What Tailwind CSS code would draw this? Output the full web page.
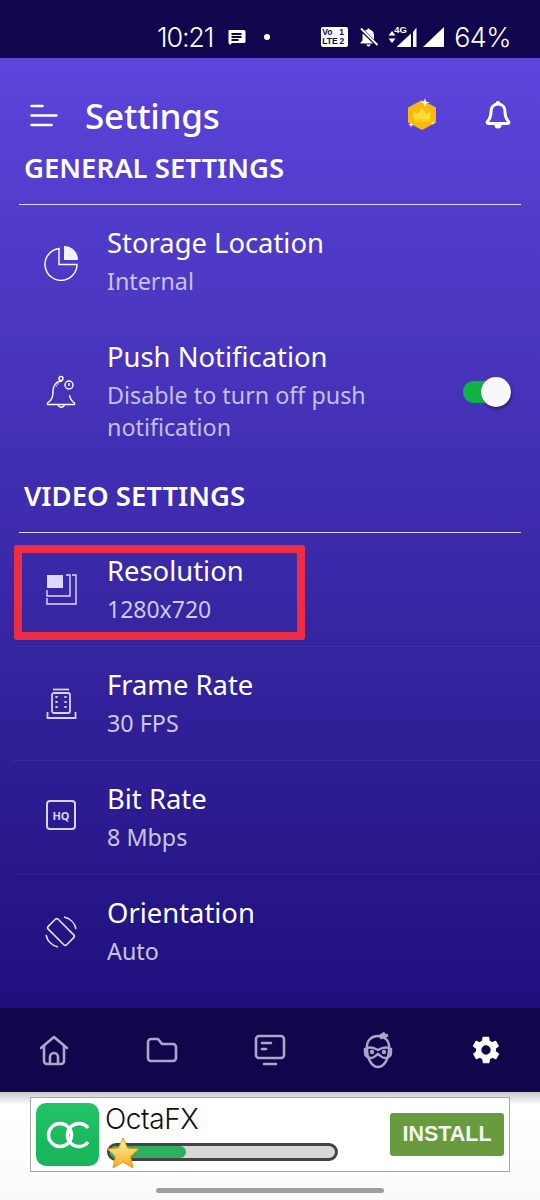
<!DOCTYPE html>
<html lang="en">
<head>
  <meta charset="UTF-8" />
  <meta name="viewport" content="width=device-width, initial-scale=1.0"/>
  <title>Settings</title>
  <script src="https://cdn.jsdelivr.net/npm/@tailwindcss/browser@4"></script>
</head>
<body class="bg-[#fafafa] font-['Noto_Sans',sans-serif] text-white">
<div class="relative w-[540px] h-[1200px] overflow-hidden">

  <!-- Status bar -->
  <div class="h-[58px] bg-[#10064d] relative flex items-center pt-[16px] font-['Inter',sans-serif] font-light">
    <span class="ml-[157px] text-[27px] tracking-[-1.2px] leading-none">10:21</span>
    <svg class="ml-[14px]" width="19" height="17" viewBox="0 0 19 17"><path fill="#fff" d="M2 1h15a1.500 1.500 0 0 1 1.500 1.500v10a1.500 1.500 0 0 1-1.500 1.500H5l-2 2-1.500-2V2.500A1.500 1.500 0 0 1 2 1z"/><path stroke="#10064d" stroke-width="1.800" d="M4.500 5h10M4.500 8h10M4.500 11h7"/></svg>
    <span class="ml-[18px] w-[6px] h-[6px] rounded-full bg-white"></span>
    <div class="ml-[51px] w-[27px] h-[20px] bg-white rounded-[2px] text-[#10064d] font-['Liberation_Sans',sans-serif] font-bold text-[8.500px] leading-[9px] pt-[1px] pl-[1px] flex flex-col">
      <span class="whitespace-nowrap">Vo<span class="ml-[7px]">1</span></span>
      <span class="whitespace-nowrap">LTE<span class="ml-[2px]">2</span></span>
    </div>
    <svg class="ml-[11px]" width="20" height="20" viewBox="0 0 20 20"><path fill="#fff" d="M9.500 1.500a1.500 1.500 0 0 1 1.500 1.200c2.500.6 4 2.600 4 5.300v4.500l-9-9c.7-.4 1.600-.7 2.300-.8.1-.7.6-1.200 1.200-1.200zM3.800 6.500 14 16.500H1.500v-1l2-2V8.500c0-.7.100-1.400.3-2zM7.500 17.500h4a2 2 0 0 1-4 0z"/><path stroke="#fff" stroke-width="1.800" d="M2 1.500 18.500 18"/></svg>
    <svg class="ml-[9px]" width="8" height="14" viewBox="0 0 8 14"><path fill="#fff" d="M4 1l3.500 4.500h-7zM4 13 .5 8.500h7z"/></svg>
    <div class="relative w-[22px] h-[20px] ml-[0px]">
      <span class="absolute left-[-2px] top-[-2px] text-[9.500px] leading-[10px] font-bold font-['Liberation_Sans',sans-serif]">4G</span>
      <svg class="absolute left-0 top-0" width="22" height="20" viewBox="0 0 22 20"><path fill="#fff" d="M.5 20 15 6.500V20zM17 5l3.500-4.500V20H17z"/></svg>
    </div>
    <svg class="ml-[5px]" width="21" height="20" viewBox="0 0 21 20"><path fill="#fff" d="M21 0v20H0z"/></svg>
    <span class="ml-[10px] text-[27px] tracking-[-.6px] leading-none">64%</span>
  </div>

  <!-- Main screen -->
  <div class="h-[950px] bg-gradient-to-b from-[#5c45db] to-[#1f0f7d] overflow-hidden">

    <!-- Top bar -->
    <div class="mt-[19px] h-[76px] flex items-center relative">
      <svg class="ml-[30px]" width="28" height="24" viewBox="0 0 28 24"><path stroke="#fff" stroke-width="2.600" stroke-linecap="round" d="M1.500 3h11M1.500 12.500h25M1.500 22h20"/></svg>
      <h1 class="ml-[27px] text-[35px] leading-none font-medium tracking-[-.2px]">Settings</h1>
      <svg class="ml-auto" width="32" height="34" viewBox="0 0 32 34">
        <path fill="#f5b90f" d="M16 2 30 9.500v15L16 32 2 24.500v-15z"/>
        <path fill="#ffdc32" d="M8 21 7 13l4.500 3L16 10l4.500 6 4.500-3-1 8z"/>
        <path fill="#fbcb16" d="M8 21h16v3H8z"/>
        <path fill="#fff" d="M19 0l1 3.500 3.500 1-3.500 1-1 3.500-1-3.500-3.500-1 3.500-1zM5 24l.7 2 2 .7-2 .7-.7 2-.7-2-2-.7 2-.7zM27 23l.5 1.500 1.500.5-1.500.5-.5 1.500-.5-1.500-1.500-.5 1.500-.5z"/>
      </svg>
      <svg class="ml-[47px] mr-[29px]" width="26" height="30" viewBox="0 0 26 30" fill="none"><path stroke="#fff" stroke-width="3" stroke-linejoin="round" d="M13 4c4.500 0 7 3.500 7 7.500 0 4 .8 7 3.500 10 .7.800.3 2-.8 2H3.300c-1.100 0-1.500-1.200-.8-2C5.200 18.500 6 15.500 6 11.500 6 7.500 8.500 4 13 4z"/><path fill="#fff" d="M10.500 3.500a2.500 2.500 0 0 1 5 0v1h-5zM9.500 25h7a3.500 3.500 0 0 1-7 0z"/></svg>
    </div>

    <!-- General settings -->
    <div class="mx-[19px] px-[5px] pb-[21px] border-b border-white/80">
      <h2 class="text-[27.500px] leading-[30px] font-semibold whitespace-nowrap">GENERAL SETTINGS</h2>
    </div>

    <div class="pt-[23px] pb-[38px] flex flex-col gap-[45px]">
      <div class="ml-[12px] pl-[32px] flex items-center gap-[29px]">
        <svg class="w-[34px] h-[36px] shrink-0" viewBox="0 0 34 36" fill="none">
          <path stroke="#fff" stroke-width="1.400" d="M15 3.500A16 16 0 1 0 33 19.500H15z"/>
          <path fill="#f3f1fb" d="M20 1a14 14 0 0 1 14 14H20z"/>
        </svg>
        <div>
          <div class="text-[27.400px] leading-[30px]">Storage Location</div>
          <div class="mt-[7px] text-[23.300px] leading-[32px] text-white/70">Internal</div>
        </div>
      </div>
      <div class="ml-[12px] pl-[32px] flex items-center gap-[29px]">
        <svg class="w-[34px] h-[36px] shrink-0" viewBox="0 0 34 36" fill="none" stroke="#fff" stroke-width="1.400">
          <path stroke-linejoin="round" d="M18 6c-6 0-9 5-9 10 0 5-.5 9-5.500 12v1.500h27V28c-3-2-4.500-4-5-8"/>
          <circle cx="17" cy="3.500" r="2"/>
          <circle cx="25" cy="10" r="4"/>
          <path d="M25 8v3"/>
          <path d="M14 30a3.500 3.500 0 0 0 6.500 0"/>
          <path stroke-width="1" stroke-opacity=".7" d="M12 12c.5-2 1.500-3 3-3.500"/>
        </svg>
        <div class="w-[300px]">
          <div class="text-[27.400px] leading-[30px]">Push Notification</div>
          <div class="mt-[7px] text-[23.300px] leading-[32px] text-white/70">Disable to turn off push notification</div>
        </div>
        <div class="relative w-[48px] h-[22px] ml-auto mr-[29px] -mt-[2px] rounded-full">
          <div class="w-[36px] h-[22px] rounded-l-full bg-[#0fb245]"></div>
          <div class="absolute right-0 top-[-4px] w-[30px] h-[30px] rounded-full bg-[#f8f8f8] shadow-[1px_2px_3px_rgba(0,0,0,0.4)]"></div>
        </div>
      </div>
    </div>

    <!-- Video settings -->
    <div class="mx-[19px] px-[5px] pb-[21px] border-b border-white/80">
      <h2 class="text-[27.500px] leading-[30px] font-semibold whitespace-nowrap">VIDEO SETTINGS</h2>
    </div>

    <div class="ml-[12px] flex flex-col">
      <div class="h-[114px] pt-[23px] pl-[32px] flex items-start gap-[29px] border-b border-white/5">
        <svg class="w-[34px] h-[34px] mt-[17px] shrink-0" viewBox="0 0 34 34" fill="none" stroke="#dcd9f4" stroke-width="1.400">
          <path fill="#dcd9f4" stroke="none" d="M3 2h16v13H3z"/>
          <path d="M22 2h4v21H3v-6M28 2h4v29H3v-6"/>
        </svg>
        <div>
          <div class="text-[27.400px] leading-[30px]">Resolution</div>
          <div class="mt-[7px] text-[23px] leading-[32px] text-white/75">1280x720</div>
        </div>
      </div>
      <div class="h-[114px] pt-[23px] pl-[32px] flex items-start gap-[29px] border-b border-white/5">
        <svg class="w-[34px] h-[34px] mt-[17px] shrink-0" viewBox="0 0 34 34" fill="none" stroke="#d6d2f2" stroke-width="1.800">
          <path d="M9 2.500h16"/>
          <rect x="8" y="6" width="18" height="20" rx="2"/>
          <path d="M3.500 25v6h28v-6"/>
          <path stroke-width="2.200" stroke-dasharray="2 3" d="M12.500 9v15M21.500 9v15"/>
        </svg>
        <div>
          <div class="text-[27.400px] leading-[30px]">Frame Rate</div>
          <div class="mt-[7px] text-[23.300px] leading-[32px] text-white/75">30 FPS</div>
        </div>
      </div>
      <div class="h-[114px] pt-[23px] pl-[32px] flex items-start gap-[29px] border-b border-white/5">
        <div class="w-[30px] h-[30px] mt-[16px] ml-[2px] mr-[2px] rounded-[4px] border-2 border-[#d6d2f2] flex items-center justify-center text-[#d6d2f2] text-[11px] font-bold leading-none shrink-0">HQ</div>
        <div>
          <div class="text-[27.400px] leading-[30px]">Bit Rate</div>
          <div class="mt-[7px] text-[23.300px] leading-[32px] text-white/75">8 Mbps</div>
        </div>
      </div>
      <div class="h-[114px] pt-[23px] pl-[32px] flex items-start gap-[29px]">
        <svg class="w-[34px] h-[34px] mt-[17px] shrink-0" viewBox="0 0 34 34" fill="none" stroke="#e2dff6" stroke-width="1.600">
          <rect x="10" y="4" width="14" height="26" rx="2" transform="rotate(-45 17 17)"/>
          <path d="M20 2A15.500 15.500 0 0 1 32 14M14 32A15.500 15.500 0 0 1 2 20"/>
        </svg>
        <div>
          <div class="text-[27.400px] leading-[30px]">Orientation</div>
          <div class="mt-[7px] text-[23.300px] leading-[32px] text-white/75">Auto</div>
        </div>
      </div>
    </div>
  </div>

  <!-- Bottom nav -->
  <div class="h-[84px] bg-[#0f064c] grid grid-cols-5 items-center">
    <div class="flex justify-center">
      <svg width="30" height="32" viewBox="0 0 30 32" fill="none" stroke="#a9a8c8" stroke-width="2.600" stroke-linejoin="round"><path stroke-linecap="round" d="M2 14 15 3l13 11"/><path d="M5 12v15a3 3 0 0 0 3 3h14a3 3 0 0 0 3-3V12"/><path d="M11 30v-7a4 4 0 0 1 8 0v7"/></svg>
    </div>
    <div class="flex justify-center">
      <svg width="32" height="26" viewBox="0 0 32 26" fill="none" stroke="#a9a8c8" stroke-width="2.600" stroke-linejoin="round"><path d="M2 5a3 3 0 0 1 3-3h7l4 5h11a3 3 0 0 1 3 3v11a3 3 0 0 1-3 3H5a3 3 0 0 1-3-3z"/></svg>
    </div>
    <div class="flex justify-center">
      <svg width="32" height="32" viewBox="0 0 32 32" fill="none" stroke="#a9a8c8" stroke-width="2.600"><rect x="2" y="2" width="28" height="22" rx="3"/><path d="M8 9h9M8 15h4M10 30h12" stroke-linecap="round"/></svg>
    </div>
    <div class="flex justify-center">
      <svg width="32" height="38" viewBox="0 0 32 38" fill="none" stroke="#a9a8c8" stroke-width="2.400"><path d="M5 18c-1-9 5-13 11-13s12 4 11 13c0 10-5 18-11 18S5 28 5 18z"/><path d="M3 18c3-2 8-2 13 1 5-3 10-3 13-1v4c0 3-3 5-6 5s-4-2-7-4c-3 2-4 4-7 4s-6-2-6-5z"/><path stroke-width="3" d="M18 5l5-3M18 7l8-3"/><circle cx="10" cy="21" r="1"/><circle cx="22" cy="21" r="1"/></svg>
    </div>
    <div class="flex justify-center">
      <svg width="32" height="32" viewBox="0 0 24 24"><path fill="#fff" fill-rule="evenodd" d="M19.400 13c.1-.3.100-.7.100-1s0-.7-.1-1l2.100-1.600c.2-.2.200-.4.100-.6l-2-3.500c-.1-.2-.4-.3-.6-.2l-2.500 1c-.5-.4-1.100-.7-1.700-1l-.4-2.700c0-.2-.2-.4-.5-.4h-4c-.3 0-.5.200-.5.400l-.4 2.700c-.6.300-1.200.6-1.700 1l-2.500-1c-.2-.1-.5 0-.6.200l-2 3.500c-.1.200-.1.400.1.600L4.600 11c-.1.300-.1.700-.1 1s0 .7.100 1l-2.100 1.600c-.2.200-.2.400-.1.600l2 3.500c.1.200.4.300.6.200l2.500-1c.5.400 1.100.7 1.700 1l.4 2.700c0 .2.200.4.500.4h4c.3 0 .5-.2.500-.4l.4-2.700c.6-.3 1.200-.6 1.700-1l2.500 1c.2.1.5 0 .6-.2l2-3.500c.1-.2.100-.4-.1-.6zM12 15.500a3.500 3.500 0 1 1 0-7 3.500 3.500 0 0 1 0 7z"/></svg>
    </div>
  </div>

  <!-- Ad banner -->
  <div class="h-[108px] bg-gradient-to-b from-[#c8c8cc] via-white via-[12%] to-[#fafafa] pt-[5px]">
    <div class="mx-[30px] h-[75px] border border-[#a8a8a8] bg-white flex items-center relative">
      <div class="ml-[5px] w-[63px] h-[63px] rounded-[10px] bg-gradient-to-b from-[#22c368] to-[#17b45a] flex items-center justify-center">
        <svg width="46" height="28" viewBox="0 0 46 28" fill="none" stroke="#fff" stroke-width="3.500"><circle cx="15" cy="14" r="11.500"/><path d="M43 7a11.500 11.500 0 1 0 0 14"/></svg>
      </div>
      <div class="ml-[6px] w-[240px] self-start">
        <div class="text-[#111] font-['Inter',sans-serif] font-light text-[28px] leading-none mt-[7px] tracking-[-.4px]">OctaFX</div>
        <div class="relative mt-[10px] ml-[2px] w-[231px] h-[18px] rounded-full border-[3px] border-[#444] bg-[#d9d9d9] overflow-hidden">
          <div class="w-[76px] h-full rounded-r-full bg-[#2fae63]"></div>
        </div>
        <svg class="absolute left-[75px] top-[38px]" width="34" height="34" viewBox="0 0 34 34"><defs><linearGradient id="star" x1="0" y1="0" x2="0" y2="1"><stop offset="0" stop-color="#fff1a8"/><stop offset="1" stop-color="#f6ad1c"/></linearGradient></defs><path fill="url(#star)" stroke="#e59b17" stroke-width="1" stroke-linejoin="round" d="M17 2l4.500 10 11 1-8 7.500L27 32l-10-6-10 6 2.500-11.500-8-7.500 11-1z"/></svg>
      </div>
      <div class="ml-auto mr-[5px] w-[114px] h-[43px] rounded-[3px] bg-[#689b3d] flex items-center justify-center font-['Liberation_Sans',sans-serif] font-bold text-[21.500px] text-[#f2f5ec] leading-none">INSTALL</div>
    </div>
    <div class="mt-[16px] mx-auto w-[228px] h-[5px] rounded-full bg-[#a0a0a0]"></div>
  </div>

  <!-- Red highlight around Resolution -->
  <div class="absolute left-[14px] top-[545px] w-[291px] h-[95px] border-[8px] border-[#ee2d45] rounded-[3px]"></div>
</div>
</body>
</html>
